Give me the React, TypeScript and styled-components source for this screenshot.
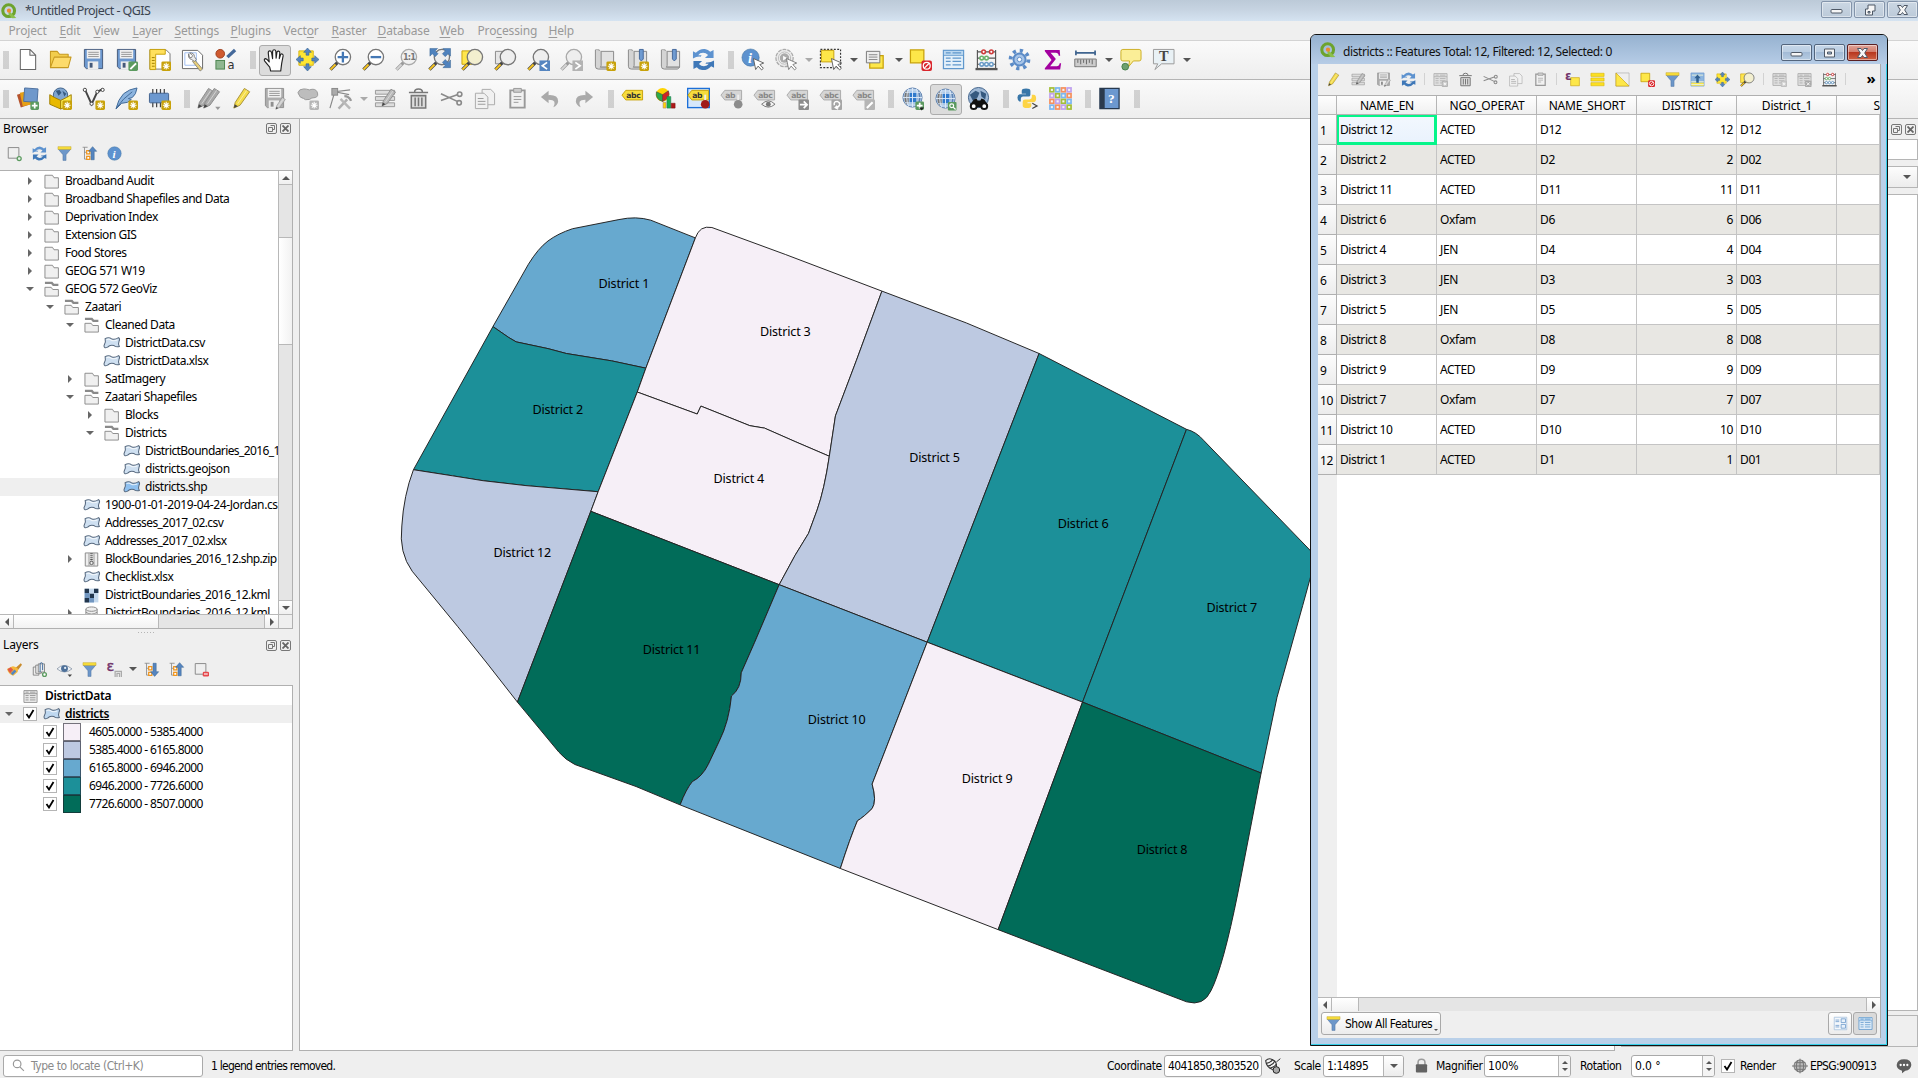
import React from "react";
import styled, { createGlobalStyle, css } from "styled-components";

const ui = `"Noto Sans", "Open Sans", sans-serif`;
const tahoma = `"DejaVu Sans Condensed", "DejaVu Sans", sans-serif`;

const Global = createGlobalStyle`
  body { margin: 0; background: #efefef; overflow: hidden; }
  * { box-sizing: border-box; }
  svg { display: block; flex: none; }
`;

/* ---------- icons ---------- */

const badge = (
  <g>
    <rect x="14" y="14" width="10" height="10" rx="1.5" fill="#c8a20a" />
    <path d="M19 15.5v7M15.5 19h7M16.6 16.6l4.8 4.8M21.4 16.6l-4.8 4.8" stroke="#fff" strokeWidth="1.1" />
  </g>
);
const greyBadge = (
  <g>
    <rect x="14" y="14" width="10" height="10" rx="1.5" fill="#b5b5b5" />
    <path d="M19 15.5v7M15.5 19h7M16.6 16.6l4.8 4.8M21.4 16.6l-4.8 4.8" stroke="#fff" strokeWidth="1.1" />
  </g>
);
const plusBadge = (
  <g>
    <rect x="15" y="15" width="9" height="9" rx="1.5" fill="#5b9a5f" />
    <path d="M19.5 16.5v6M16.5 19.5h6" stroke="#fff" strokeWidth="1.8" />
  </g>
);
const noBadge = (
  <g>
    <rect x="13" y="13" width="11" height="11" rx="2" fill="#d9252b" />
    <circle cx="18.5" cy="18.5" r="3.6" fill="none" stroke="#fff" strokeWidth="1.3" />
    <path d="M16.2 20.8l4.6-4.6" stroke="#fff" strokeWidth="1.3" />
  </g>
);
const glass = (lens: string, grey = false) => (
  <g>
    <path d="M1.5 22.5L9 15" stroke={grey ? "#999" : "#444"} strokeWidth="3.4" />
    <path d="M1.5 22.5L6.8 17.2" stroke={grey ? "#d5d5d5" : "#f7c520"} strokeWidth="2" />
    <circle cx="14.5" cy="9.5" r="8" fill={lens} stroke={grey ? "#aaa" : "#777"} strokeWidth="1.4" />
  </g>
);
const floppy = (c: string, s: string) => (
  <g>
    <path d="M2.5 1.5h19v20h-17l-2-2z" fill={c} stroke={s} />
    <rect x="5" y="2" width="14" height="9" fill="#efefef" />
    <path d="M6.5 4.5h11M6.5 6.7h11M6.5 8.9h11" stroke="#999" />
    <rect x="6" y="14" width="11" height="8" fill="#eee" />
    <rect x="8" y="15.5" width="3" height="5" fill={s} />
  </g>
);
const pencil = (c: string, s: string) => (
  <g>
    <path d="M4 22l1.5-6L15 1.500l5.500 3.500L10.500 19z" fill={c} stroke={s} strokeLinejoin="round" />
    <path d="M8 17.500L17.500 3.500" stroke="#fff" strokeOpacity=".5" />
    <path d="M4 22l1-4 3.2 2z" fill="#444" />
  </g>
);
const cursor = <path d="M13 11l2.3 11.5 2.6-3.6 3.6 4 1.8-1.7-3.6-3.9 4-1.6z" fill="#fff" stroke="#555" strokeWidth=".9" />;
const tagOf = (text: string, fill: string, line: string, ink: string) => (
  <g>
    <path d="M1 8.5l4-5h17.5v10H5z" fill={fill} stroke={line} />
    <text x="5.500" y="11.4" fontSize="8" fontWeight="700" fontFamily="DejaVu Sans" letterSpacing="-.4" fill={ink}>{text}</text>
  </g>
);
const globe = (
  <g>
    <circle cx="12" cy="11" r="10" fill="#bcd3ec" stroke="#5d7fae" />
    <path d="M5 4q-3 7 0 14l3-1V5z" fill="#777" />
    <path d="M9 5h7v12H9z" fill="#2f79cc" />
    <path d="M19 4q3 7 0 14l-2-1V5z" fill="#5b83b5" />
    <path d="M12 1v20M2 11h20M4 5.5h16M4 16.5h16M8 1.5q-4 9.500 0 19M16 1.500q4 9.500 0 19" stroke="#dce9f8" fill="none" strokeWidth="1" />
  </g>
);
const zoomWindow = <path d="M1 3h13v14H1z" fill="#ffe64d" stroke="#c8a20a" />;
const refresh = (
  <g fill="#5d92cf">
    <path d="M1 11V3.500l3 1.500Q8 .5 13.500 1q3.500.5 5.500 3l3.500-2v8.500h-9l3.300-3.200Q14.500 5 11.500 5 8 5 6.500 7.500H10L9 9q-4-.5-8 2z" />
    <path d="M23 13v7.500l-3-1.500Q16 23.500 10.500 23q-3.500-.5-5.500-3l-3.500 2v-8.500h9l-3.300 3.200Q9.500 19 12.500 19q3.500 0 5-2.500H14l1-1.500q4 .5 8-2z" fill="#3f78b8" />
  </g>
);
const scroll = (
  <g>
    <path d="M2.500 2h4v18h15V3.500H7" fill="#e2e2e2" stroke="#888" />
    <path d="M2.500 2v17q0 3 3 3h14l2-2h-14q1-1 1-2V3.500" fill="#d4d4d4" stroke="#888" />
  </g>
);
const ribbon = <path d="M14 1.500h4v10l-2 2-2-2z" fill="#6f9bd1" stroke="#44679b" />;
const arrows4 = (
  <path
    d="M12 0l4 4.500h-2.500v3h-3v-3H8zM12 24l4-4.500h-2.500v-3h-3v3H8zM0 12l4.500-4v2.500h3v3h-3V16zM24 12l-4.500-4v2.500h-3v3h3V16z"
    fill="#5585c0"
    stroke="#34618f"
    strokeWidth=".6"
  />
);
const funnel = (
  <g>
    <path d="M2 5l7.500 9v9h5v-9L22 5z" fill="#6d97c9" stroke="#44699a" strokeWidth=".7" />
    <path d="M1.500 1h21v4.500h-21z" fill="#f7dd3a" stroke="#b79a1f" strokeWidth=".6" />
  </g>
);
const abacus = (
  <g>
    <path d="M2.500 2v19M21.500 2v19M2.500 4h19M2.500 10.500h19M2.500 17h19" stroke="#555" strokeWidth="1.2" fill="none" />
    <path d="M.5 22h23" stroke="#555" strokeWidth="2.400" />
    <g fill="#fff" strokeWidth="1.600">
      <g stroke="#cf3b3b"><circle cx="9" cy="4" r="1.900" /><circle cx="17" cy="4" r="1.900" /></g>
      <g stroke="#6cb26c"><circle cx="7" cy="10.500" r="1.900" /><circle cx="12" cy="10.500" r="1.900" /></g>
      <g stroke="#6b9cc6"><circle cx="7" cy="17" r="1.900" /><circle cx="12" cy="17" r="1.900" /><circle cx="17" cy="17" r="1.900" /></g>
    </g>
  </g>
);
const trash = (
  <g stroke="#777" fill="none" strokeWidth="1.600">
    <path d="M4.500 9h15v13h-15z" fill="#ddd" /><path d="M2 5.800h20M8 5q0-3 4-3t4 3M8.500 11v9M12 11v9M15.500 11v9" />
  </g>
);
const scissors = (
  <g fill="none" stroke="#8a8a8a" strokeWidth="1.700">
    <path d="M1 7l17 8M1 14l17-6" /><circle cx="20.500" cy="7.500" r="2.300" /><circle cx="20" cy="16.500" r="2.300" />
  </g>
);
const pages = (
  <g fill="#f1f1f1" stroke="#aaa">
    <path d="M9.500 2.500h9l4 4v12h-13z" /><path d="M2.500 6.500h9l4 4v12h-13z" /><path d="M5 12h6M5 15h8M5 18h8" stroke="#999" />
  </g>
);
const clipboard = (
  <g fill="#f1f1f1" stroke="#999">
    <path d="M4.500 3.500h15v18h-15z" strokeWidth="2" /><path d="M8 1.500h8v4H8z" fill="#ccc" /><path d="M8 10h8M8 13h8M8 16h5" />
  </g>
);
const tableEdit = (
  <g>
    <path d="M1.500 3.500h20v4h-20zM1.500 10h20v4h-20zM1.500 16.500h20v4h-20z" fill="#ddd" stroke="#999" />
    <g transform="translate(5 1) scale(.85)">{pencil("#b9b9b9", "#888")}</g>
  </g>
);
const gridTable = (c: string, f: string) => (
  <g fill="none" stroke={c} strokeWidth="1.300">
    <path d="M1.500 2.500h21v19h-21z" fill={f} /><path d="M1.500 7.500h21M4 5h5M11 5h9M4 10.500h5M11 10.500h9M4 14h5M11 14h9M4 17.500h5M11 17.500h9" />
  </g>
);
const yellowBox = <path d="M1.500 2h14v13.500h-14z" fill="#fde749" stroke="#c8a20a" strokeWidth="1.300" />;
const vectorShape = (a: string) => (
  <g transform="translate(0 2) scale(1 .92)">
    <path d="M3 3.500Q8 .5 12.500 4 17 5.500 22 2q2.500 2 .5 6Q21 12 23 15.500 19 17 15.500 14 10 12 6.500 16.500 1 19 1.500 14 4.500 9 3 3.500z" fill={a} stroke="#56687e" strokeWidth="1.500" />
    <path d="M5 4.800q4-1.500 7 1.200 4 1.500 8-.5" stroke="#fff" strokeOpacity=".7" strokeWidth="1.800" fill="none" />
  </g>
);
const infoBall = (
  <g>
    <circle cx="10" cy="10" r="9" fill="#5d92cf" stroke="#41719f" strokeWidth=".6" />
    <text x="7.200" y="15.500" fontSize="15" fontStyle="italic" fontWeight="700" fontFamily="Liberation Serif" fill="#fff">i</text>
  </g>
);
const treeArrow = (up: boolean) => (
  <g>
    <path d="M1 2h8M4 2v19h6M4 10h6" stroke="#888" fill="none" strokeWidth="1.300" />
    <path d="M7.500 7.500h5v5h-5zM7.500 16.500h5v5h-5z" fill="#fff" stroke="#f0951d" strokeWidth="2" />
    <path d={up ? "M17 1l6.500 7.500h-4V22h-5V8.500h-4z" : "M17 23l6.500-7.500h-4V2h-5v13.500h-4z"} fill="#5585c0" stroke="#34618f" strokeWidth=".8" />
  </g>
);

const icons: Record<string, React.ReactNode> = {
  page: <path d="M4.500 1.500h10l6 6v15h-16zM14.500 1.500v6h6" fill="#fff" stroke="#666" strokeWidth="1.100" strokeLinejoin="round" />,
  folder: (
    <g stroke="#c79a20" strokeWidth="1.100" strokeLinejoin="round">
      <path d="M1.500 20V3.500h7l2.500 3h9v4" fill="#f2cd4c" /><path d="M1.500 20.500l4-11h17.500l-3 11z" fill="#fddb6b" />
    </g>
  ),
  save: floppy("#6c98cf", "#44597a"),
  saveAs: <g>{floppy("#6c98cf", "#44597a")}<rect x="14" y="14" width="10" height="10" rx="1.500" fill="#5b9a5f" /><path d="M16 22l6-6" stroke="#fff" strokeWidth="2" /></g>,
  layout: (
    <g>
      <path d="M2 2h17l4 4v16H2z" fill="#fff" stroke="#777" /><path d="M2 1.500h16v5H8v16H2z" fill="#ffe05c" stroke="#c8a20a" />
      <path d="M4 10h3M4 13h3M4 16h3M4 19h3" stroke="#a27f00" />{badge}
    </g>
  ),
  manager: (
    <g>
      <path d="M1.500 2.500h16l5 5v14h-21z" fill="#fff" stroke="#666" /><path d="M4 5h12v13H4z" fill="none" stroke="#9fbdf0" />
      <path d="M14 12l8.500 10-2.500 2-8-10z" fill="#e8cf7a" stroke="#777" strokeWidth=".8" />
      <path d="M8 6q-1 5 3 6l3 2 2-2-2-3q0-4-5-4l3 3-1 2-2 0z" fill="#ececec" stroke="#666" strokeWidth=".8" />
    </g>
  ),
  style: (
    <g>
      <circle cx="6.500" cy="6" r="4.500" fill="#cf5a30" stroke="#9d3d1b" /><path d="M14 9.500L22 2" stroke="#44699a" strokeWidth="3.500" />
      <rect x="2" y="13" width="9" height="9" fill="#8fb791" stroke="#4c8450" />
      <text x="14" y="22" fontSize="12" fontFamily="DejaVu Sans" fill="#333">a</text>
    </g>
  ),
  hand: (
    <path
      d="M8 23l-1-4-5-6q-1.500-2.500.5-3 1.500 0 4 3.500L5.500 4q0-2 1.500-2t2 2l1 6V2.500Q10.300.8 11.700.8t1.700 1.700l.3 7 .8-6q.3-1.500 1.700-1.300T17.500 4l-.5 6 1.300-4q.5-1.300 1.700-.8t1 2L19.500 15l-1 8z"
      fill="#fff" stroke="#222" strokeWidth="1.200" strokeLinejoin="round"
    />
  ),
  panSel: <g><path d="M3 3h15v15H3z" fill="#ffe633" stroke="#d6b411" />{arrows4}</g>,
  zoomIn: <g>{glass("#fff")}<path d="M14.500 4v11M9 9.500h11" stroke="#4478b5" strokeWidth="2.400" /></g>,
  zoomOut: <g>{glass("#fff")}<path d="M9 9.500h11" stroke="#4478b5" strokeWidth="2.400" /></g>,
  zoomOne: <g>{glass("#f1f1f1", true)}<text x="8.300" y="12.500" fontSize="8.500" fontWeight="700" letterSpacing="-.8" fontFamily="DejaVu Sans" fill="#777">1:1</text></g>,
  zoomFull: (
    <g>
      {glass("#eee")}
      <path d="M2 .5h8L7.500 3l3 3-3 3-3-3L2 8.500zM23.500.5v8L21 6l-3 3-3-3 3-3-2.500-2.500zM23.500 20.500h-8L18 18l-3-3 3-3 3 3 2.500-2.500z" fill="#4f82bd" stroke="#34618f" strokeWidth=".5" />
    </g>
  ),
  zoomSel: <g>{zoomWindow}{glass("#f3efcf")}</g>,
  zoomLayer: <g><path d="M1.500 3.500h10v13h-10z" fill="#e6e6e6" stroke="#888" />{glass("#eee")}</g>,
  zoomLast: <g>{glass("#eee")}<rect x="13" y="13" width="11" height="11" fill="#5585c0" /><path d="M21 15l-5 3.500 5 3.500" stroke="#fff" strokeWidth="1.800" fill="none" /></g>,
  zoomNext: <g>{glass("#eee", true)}<rect x="13" y="13" width="11" height="11" fill="#b3b3b3" /><path d="M16 15l5 3.500-5 3.500" stroke="#fff" strokeWidth="1.800" fill="none" /></g>,
  newView: <g>{scroll}{badge}</g>,
  newMark: <g>{scroll}{ribbon}{badge}</g>,
  marks: <g>{scroll}{ribbon}</g>,
  refresh,
  identify: <g>{infoBall}{cursor}</g>,
  action: (
    <g opacity=".8">
      <circle cx="11" cy="10.500" r="9" fill="#e8e8e8" stroke="#999" strokeWidth="1.300" strokeDasharray="4 1" />
      <circle cx="11" cy="10.500" r="6.300" fill="#fff" stroke="#aaa" />
      <circle cx="11" cy="10.500" r="5" fill="#999" /><path d="M9.500 8v5l4-2.500z" fill="#fff" />{cursor}
    </g>
  ),
  select: <g><path d="M1.500 1.500h21v19h-21z" fill="none" stroke="#333" strokeDasharray="2 1.500" strokeWidth="1.200" /><path d="M2.500 2.500h13v12h-13z" fill="#fde749" stroke="#c8a20a" />{cursor}</g>,
  selValue: <g><path d="M6 8h14v13H6z" fill="#fde749" stroke="#c8a20a" strokeWidth="1.300" /><path d="M2.500 3.500h14v12h-14z" fill="#eee" stroke="#777" /><path d="M5 7h9M5 9.500h9M5 12h9" stroke="#888" /></g>,
  deselect: <g>{yellowBox}{noBadge}</g>,
  attrTable: <g>{gridTable("#5f97cc", "#e4f0fa")}<path d="M2 3h20v4H2z" fill="#bcd8f0" /><path d="M4 5h5M11 5h9" stroke="#5f97cc" strokeWidth="1.300" /></g>,
  abacus,
  gear: (
    <g>
      <circle cx="12" cy="12" r="9.300" fill="none" stroke="#5b8bc7" strokeWidth="4" strokeDasharray="3.300 4" />
      <circle cx="12" cy="12" r="6.300" fill="#a6c4e8" stroke="#5b8bc7" strokeWidth="2" /><circle cx="12" cy="12" r="2.300" fill="#fff" stroke="#5b8bc7" />
    </g>
  ),
  sigma: <path d="M4 2h15.500l.5 6h-1.500q-.5-3-3-3H10l5.500 6.500L9.500 19h7q2.500 0 3-3H21l-1 6.500H4V21l7-8.500L4 3.500z" fill="#a3009f" />,
  measure: <g><path d="M1.500 5h21M2 2.500v5M22 2.500v5" stroke="#3f648f" strokeWidth="1.800" /><path d="M.8 11.500h22.400v8H.8z" fill="#ccc" stroke="#777" /><path d="M4 12v3.500M7 12v5M10 12v3.500M13 12v5M16 12v3.500M19 12v5" stroke="#666" /></g>,
  tip: <g><path d="M4 1.500h17q2 0 2 2v8q0 2-2 2h-6l-5 6 1-6H4q-2 0-2-2v-8q0-2 2-2z" fill="#fbee97" stroke="#ccae24" /><circle cx="6.500" cy="19.500" r="3.500" fill="#6ea06e" stroke="#46804a" /></g>,
  annotate: <g><path d="M1.500 1.500h21.500v15H10l-7 6 3-6H1.500z" fill="#e9f1f5" stroke="#999" /><text x="7.200" y="14" fontSize="15" fontWeight="700" fontFamily="Liberation Serif" fill="#444">T</text></g>,
  layers: (
    <g>
      <path d="M1 8l10-3 4 13-10 3.500z" fill="#b5522c" /><path d="M4 6l11-2 2 14-10 2z" fill="#e5a016" />
      <path d="M9 1l14 1-1 14-14-1z" fill="#6f98cb" stroke="#4b6f9f" />{plusBadge}
    </g>
  ),
  package: (
    <g>
      <circle cx="12" cy="8.500" r="7.500" fill="#7fa5cf" stroke="#3d5f88" /><path d="M7 4l4-1 2 3-3 3zM14 4l4 3-2 3z" fill="#35597f" />
      <path d="M.8 8l5 3 6.500 3v9L.8 18z" fill="#e8b900" stroke="#a07d00" /><path d="M23.200 8l-5 3-6 3v9l11-5z" fill="#ffee55" stroke="#a07d00" />{badge}
    </g>
  ),
  vNodes: <g><path d="M2 2.500l1.500 1L10 18l6-13 6-3" stroke="#444" strokeWidth="2" fill="none" /><g fill="#fff" stroke="#444"><circle cx="3" cy="3" r="1.700" /><circle cx="10" cy="17.500" r="1.700" /><circle cx="16" cy="5" r="1.700" /><circle cx="21.500" cy="3" r="1.700" /></g>{badge}</g>,
  feather: <g><path d="M1 23Q3 13 9 7q6-5 14-6-1 7-5 10l-4 1 3 1q-3 4-10 4z" fill="#8cb4df" stroke="#3f6795" /><path d="M1.500 22Q8 12 18 5" stroke="#3f6795" fill="none" />{badge}</g>,
  chip: <g><path d="M5 2v19M9 2v19M13 2v19M17 2v19" stroke="#444" strokeWidth="1.300" /><rect x="1.500" y="6.500" width="20" height="10" rx="1" fill="#6c98cf" stroke="#40608d" />{badge}</g>,
  pencils: <g><g transform="translate(-3 0)">{pencil("#a9a9a9", "#8c8c8c")}</g><g transform="translate(3 0)">{pencil("#a9a9a9", "#8c8c8c")}</g><path d="M19 20.500h5.500L21.700 24z" fill="#999" /></g>,
  pencil: pencil("#f4dc4a", "#a8913a"),
  saveGrey: <g>{floppy("#adadad", "#8f8f8f")}<g transform="translate(11 10) scale(.6)">{pencil("#ccc", "#888")}</g></g>,
  blob: <g><path d="M2 6q1-4 6-4 3 0 6 1 6-2 8 2 2 5-2 6-4 0-6 2-5 1-6-1-4 0-6-6z" fill="#bdbdbd" stroke="#999" />{greyBadge}</g>,
  nodes: (
    <g>
      <path d="M1 22L6 5l16-2M6 5l15 3" stroke="#888" strokeWidth="1.200" fill="none" /><rect x="3" y="1.500" width="6" height="7" fill="#aaa" stroke="#888" />
      <path d="M10 22.500L19 13" stroke="#b0b0b0" strokeWidth="2.600" /><path d="M12 12.500L22 22.500" stroke="#b8b8b8" strokeWidth="2.600" /><path d="M16 9.500q5 0 7 5" stroke="#999" strokeWidth="2.500" fill="none" />
    </g>
  ),
  tableEdit,
  trash,
  cut: scissors,
  copy: pages,
  paste: clipboard,
  undo: <path d="M2 10.500L10 4v4.500Q20 8 20 15q-.5 4-5 6 2-3 1-5.500-1-2.300-6-2.300V17z" fill="#aaa" />,
  redo: <path d="M22 10.500L14 4v4.500Q4 8 4 15q.5 4 5 6-2-3-1-5.500 1-2.300 6-2.300V17z" fill="#aaa" />,
  label: tagOf("abc", "#f7dc3c", "#c8a20a", "#333"),
  diagram: (
    <g>
      <circle cx="9" cy="8" r="7" fill="#ffd400" /><path d="M9 8L2.500 5Q1 13 9 15z" fill="#2bab4a" stroke="#444" strokeWidth=".6" /><path d="M9 8l6-4q3 7-6 11z" fill="#d32424" stroke="#444" strokeWidth=".6" />
      <path d="M9.500 16h3v6h-3z" fill="#ffd400" stroke="#a87" strokeWidth=".6" /><path d="M13.500 10h4v12h-4z" fill="#17b04c" stroke="#275" strokeWidth=".6" /><path d="M18 17h4v5h-4z" fill="#b01717" stroke="#711" strokeWidth=".6" />
    </g>
  ),
  labelPin: <g><rect x=".7" y="1.500" width="22.600" height="20" fill="#d7e8fb" stroke="#1c6fd8" strokeWidth="1.400" />{tagOf("ab", "#f7dc3c", "#c8a20a", "#333")}<path d="M19 8v8" stroke="#eee" strokeWidth="2" /><circle cx="19" cy="18" r="4.500" fill="#a01919" /></g>,
  labelG1: <g>{tagOf("ab", "#d5d5d5", "#aaa", "#888")}<path d="M19 8v8" stroke="#eee" strokeWidth="2" /><circle cx="19" cy="18" r="4.500" fill="#8c8c8c" /></g>,
  labelG2: <g>{tagOf("abc", "#d5d5d5", "#aaa", "#888")}<path d="M9 18q7-7 14 0-7 6-14 0z" fill="#f3f3f3" stroke="#777" /><circle cx="16" cy="18" r="2.500" fill="#777" /></g>,
  labelG3: <g>{tagOf("abc", "#d5d5d5", "#aaa", "#888")}<rect x="13" y="13" width="11" height="11" rx="1" fill="#8c8c8c" /><path d="M14.500 18.500h7M18.500 15l3.500 3.500-3.500 3.500" stroke="#fff" strokeWidth="1.800" fill="none" /></g>,
  labelG4: <g>{tagOf("abc", "#d5d5d5", "#aaa", "#888")}<rect x="13" y="13" width="11" height="11" rx="1" fill="#a5a5a5" /><path d="M16 19q-1-4 3-4 3 1 2.500 3.500-1 3-4 3M20 23l-3-1.500 2-2" stroke="#fff" strokeWidth="1.500" fill="none" /></g>,
  labelG5: <g>{tagOf("abc", "#d5d5d5", "#aaa", "#888")}<rect x="13" y="13" width="11" height="11" rx="1" fill="#b5b5b5" /><path d="M15.500 22l6-6" stroke="#fff" strokeWidth="2.200" /></g>,
  globePlus: <g>{globe}{plusBadge}<path d="M19 21.500h5l-2.500 3z" fill="#222" /></g>,
  globeSearch: <g>{globe}<rect x="14.500" y="14.500" width="9" height="9" rx="1" fill="#5b9a5f" /><circle cx="18.500" cy="18.500" r="2" fill="none" stroke="#fff" strokeWidth="1.200" /><path d="M20 20l2.500 2.500" stroke="#fff" strokeWidth="1.300" /></g>,
  globeBino: (
    <g>
      <circle cx="12" cy="11" r="10.500" fill="#9fb9d6" stroke="#3d5f88" /><path d="M3 8l6-4 4 2-2 5-5 3zM14 4l6 3-1 6-4-3z" fill="#35597f" />
      <path d="M7 13l3-1 1 2h3l1-2 3 1 4 6v2H3v-2z" fill="#111" /><circle cx="7" cy="20" r="3" fill="#fff" stroke="#111" strokeWidth="2" /><circle cx="18" cy="20" r="3" fill="#fff" stroke="#111" strokeWidth="2" />
    </g>
  ),
  python: (
    <g>
      <path d="M6 7V4q0-2.500 4.500-2.500T15 4v4q0 2-2 2H7.500Q5 10 5 13v2H3.500Q1.500 14 1.500 11T4 7.500h6.500V7z" fill="#3876a8" />
      <path d="M16.500 8h2Q21 8 21 12t-3 4h-6v1h4v2.500Q16 22 11.500 22T7 19.500v-4q0-2.500 2.500-2.500H14q2.500 0 2.500-2.500z" fill="#fdd445" />
      <path d="M17 17l5 2.700-5 2.700" stroke="#444" strokeWidth="1.200" fill="none" />
    </g>
  ),
  mosaic: (
    <g>
      {[0, 1, 2, 3].map(r =>
        [0, 1, 2, 3].map(c => (
          <rect key={`${r}${c}`} x={1 + c * 6} y={1 + r * 6} width="4" height="4" fill="#f4f4f4"
            stroke={["#a4bf3a", "#7db7f0", "#f5915f", "#c0a2ee"][(c + r * 3) % 4]} strokeWidth="1.800" />
        ))
      )}
    </g>
  ),
  help: <g><path d="M2 1.500h20v21H2z" fill="#6c98cf" stroke="#26384e" strokeWidth="1.300" /><path d="M2 1.500h5v21H2z" fill="#2b3a4d" /><text x="10.500" y="17" fontSize="14" fontWeight="700" fontFamily="Liberation Serif" fill="#fff">?</text></g>,
  addBox: <g><path d="M2 2.500h17v17H2z" fill="none" stroke="#888" strokeWidth="1.500" /><circle cx="19.500" cy="20" r="3.200" fill="#e7f3e7" stroke="#5b9a5f" strokeWidth="2" /></g>,
  removeBox: <g><path d="M2 2.500h17v17H2z" fill="none" stroke="#888" strokeWidth="1.500" /><rect x="14" y="15.500" width="10" height="7.500" rx="2" fill="#e6484c" /><path d="M16 19.200h6" stroke="#fff" strokeWidth="1.800" /></g>,
  funnel,
  up: treeArrow(true),
  down: treeArrow(false),
  info: <g transform="scale(1.200)">{infoBall}</g>,
  brush: (
    <g>
      <path d="M14 9l8-7 2 2.500-6 8z" fill="#c98b2c" />
      <path d="M8 7q5-1 10 4l-1 5-7 6q-8-3-10-11z" fill="#f6b93b" />
      <path d="M1 11l5-2.500 4 4-5 5.500q-3-3-4-7z" fill="#e05a4a" />
      <path d="M6 18l6-6 3 3-6 6z" fill="#5585c0" />
    </g>
  ),
  groupAdd: <g fill="#eee" stroke="#777" strokeWidth="1.300"><path d="M2 8h9v13H2z" /><path d="M6 5h9v13H6z" /><path d="M10 3h10v13H10z" /><path d="M13 16V4q0-3 2-3t2 3v9" fill="none" stroke="#456f9f" strokeWidth="1.600" /><circle cx="20" cy="20" r="3" fill="#fff" stroke="#5b9a5f" strokeWidth="2.200" /></g>,
  eye: <g><path d="M0 11Q11 0 24 11 12 21 0 11z" fill="#eef2f6" stroke="#8b98a7" strokeWidth="1.300" /><circle cx="12" cy="10.500" r="5.500" fill="#4d7099" /><circle cx="13" cy="9.500" r="1.800" fill="#e4eef8" /><path d="M17 20h7l-3.500 4z" fill="#444" /></g>,
  expr: <g><text x="-1" y="14" fontSize="23" fontFamily="DejaVu Sans" fill="#73376d" stroke="#73376d" strokeWidth=".7">ε</text><path d="M13 24v-9h10v9M16 24v-6h4v6" stroke="#aaa" strokeWidth="2" fill="none" /></g>,
  addRow: <g><g opacity=".75">{gridTable("#999", "#ddd")}</g>{greyBadge}</g>,
  exprSel: <g><path d="M9 9h14v13H9z" fill="#fde749" stroke="#c8a20a" /><text x="0" y="13" fontSize="19" fontWeight="700" fontFamily="DejaVu Sans" fill="#73376d">ε</text></g>,
  selAll: <path d="M1.500 2h21v5h-21zM1.500 9.500h21v5h-21zM1.500 17h21v5h-21z" fill="#fde020" stroke="#d9b90e" />,
  invert: <g><path d="M1.500 1.500h21v21h-21z" fill="#eee" stroke="#aaa" /><path d="M1.500 1.500v21h21z" fill="#fde749" stroke="#c8a20a" /></g>,
  moveTop: <g><path d="M1.500 1.500h21v21h-21z" fill="#8db5df" stroke="#6c98cf" /><path d="M2 17h20v5H2z" fill="#fde749" /><path d="M2 15.500h20M2 20h20M3 5h18" stroke="#e8f0d8" strokeWidth="1.500" /><path d="M12 4l5 6h-3v7h-4v-7H7z" fill="#31608f" /></g>,
  newField: <g opacity=".8">{gridTable("#999", "#ddd")}{greyBadge}</g>,
  delField: <g opacity=".8">{gridTable("#999", "#ddd")}<rect x="13" y="14" width="10" height="10" fill="#999" /><path d="M15.500 16.500l5 5M20.500 16.500l-5 5" stroke="#fff" strokeWidth="1.500" /></g>,
  dir: <path d="M1.500 2h12l2.500 4h7v16.500H1.500z" fill="#f0f0f0" stroke="#8a8a8a" strokeWidth="1.500" strokeLinejoin="round" />,
  dirOpen: <g><path d="M1.500 1.500h11l2.500 3H23" stroke="#8a8a8a" strokeWidth="3.500" fill="none" /><path d="M1.500 8.500h10l2.500 3.500h9v10.500H1.500z" fill="#f0f0f0" stroke="#8a8a8a" strokeWidth="1.500" /></g>,
  vector: vectorShape("#cfe0f1"),
  vectorSel: vectorShape("#8fc0ef"),
  vectorPoly: vectorShape("#bfd8f0"),
  zip: <g><path d="M2 1.500h20v21H2z" fill="#eee" stroke="#888" strokeWidth="1.500" /><path d="M8 2v20M16 2v20" stroke="#999" strokeWidth="1.500" /><path d="M12 2v13" stroke="#555" strokeWidth="4" strokeDasharray="1.700 1.400" /><circle cx="12" cy="17.500" r="2.700" fill="#eee" stroke="#555" strokeWidth="1.500" /></g>,
  raster: <g><path d="M1 1h22v22H1z" fill="#c4d8ec" /><path d="M1 1h7v7H1zM16 1h7v7h-7zM9 9h7v7H9zM1 16h7v7H1z" fill="#22364d" /><path d="M8 16h8v7H8zM1 8h8v8H1z" fill="#7196c0" /></g>,
  db: <g fill="#eee" stroke="#888" strokeWidth="1.500"><path d="M3 5v17h18V5" /><ellipse cx="12" cy="5" rx="9" ry="3.500" /><path d="M3 10q9 6 18 0M3 16q9 6 18 0" fill="none" /></g>,
  plainTable: gridTable("#888", "#ededed"),
  search: <g fill="none" stroke="#999" strokeWidth="2.200"><circle cx="9.500" cy="9" r="7" /><path d="M14.500 14.500L22 22" /></g>,
  tracker: (
    <g>
      <path d="M1 4q5-5 11-1 6 3 5 10-2 5-6 4Q2 14 1 4z" fill="#f4f4f4" stroke="#333" strokeWidth="1.600" />
      <path d="M2 8q6-1 10-6M4 12q8-1 11-8M8 15q7-2 9-6" stroke="#333" strokeWidth="1.700" fill="none" />
      <circle cx="17" cy="18" r="5" fill="#aaa" stroke="#222" strokeWidth="1.500" /><path d="M17 6l6-5" stroke="#333" strokeWidth="1.500" />
    </g>
  ),
  lock: <g><path d="M6.500 12V7q0-5 5.500-5t5.500 5v5" fill="none" stroke="#9c9c9c" strokeWidth="2.500" /><rect x="3" y="10" width="18" height="13" rx="1.500" fill="#636363" /></g>,
  crs: <g fill="none" stroke="#777" strokeWidth="1.500"><circle cx="12" cy="12" r="9" fill="#bbb" /><path d="M0 12h24M12 1v22M4 7h16M4 17h16M9 3Q4 12 9 21M15 3q5 9 0 18" /></g>,
  bubble: <g><path d="M12 2q11 0 11 8.500-1 8-9 8.500l-5 4v-4Q1 17 1 10.500 2 2 12 2z" fill="#5d5d5d" /><circle cx="7" cy="10.500" r="1.700" fill="#fff" /><circle cx="12" cy="10.500" r="1.700" fill="#fff" /><circle cx="17" cy="10.500" r="1.700" fill="#fff" /></g>,
  form: <g stroke="#6f9bcb" fill="#e8f1fa" strokeWidth="1.300"><path d="M2 2h20v20H2z" fill="#f4f8fc" stroke="#a9c3df" /><path d="M13 4.500h7v6h-7zM13 13.500h7v6h-7z" /><path d="M4 6.500h6M4 9h6M4 15h6M4 17.500h6" /></g>,
  logo: (
    <g>
      <circle cx="11.500" cy="11.500" r="8.800" fill="none" stroke="#6da32d" strokeWidth="4.600" />
      <path d="M12 12l11 10.500-6 .5-6-6z" fill="#8cc04a" /><circle cx="12" cy="11.500" r="3.200" fill="#ee8a2c" />
    </g>
  ),
};

const Icon = ({ name, size = 24 }: { name: string; size?: number }) => (
  <svg width={size} height={size} viewBox="0 0 24 24" overflow="visible">{icons[name]}</svg>
);

/* ---------- shared parts ---------- */

const Desktop = styled.div`
  width: 1918px; height: 1078px; display: flex; flex-direction: column;
  background: #efefef; overflow: hidden; color: #000; position: relative;
  font: 12px/18px ${ui}; letter-spacing: -0.25px; white-space: pre;
`;

const TitleBar = styled.div`
  height: 21px; display: flex; align-items: center; padding-left: 1px; gap: 8px; flex: none;
  background: linear-gradient(#bccad8, #c6d3e1 45%, #d5e3f1);
  color: #3b4450; font-size: 12.5px; letter-spacing: -0.55px;
`;
const TitleText = styled.div<{ $drop: number }>`padding-top: ${p => p.$drop}px;`;
const Push = styled.div`flex: 1;`;
const WinButtons = styled.div<{ $drop: number }>`display: flex; gap: 2px; align-self: flex-start; padding-top: ${p => p.$drop}px;`;
const WinButton = styled.div<{ $tone: "main" | "dialog" | "close" }>`
  width: 31px; height: 17px; border-radius: 2px; display: flex; align-items: center; justify-content: center;
  border: 1px solid #8394aa; box-shadow: inset 0 0 0 1px rgba(255,255,255,.45);
  background: ${p => p.$tone === "close" ? "linear-gradient(#e2a59a, #d27a69 48%, #b8371f 50%, #cf6346)" : p.$tone === "dialog" ? "linear-gradient(#c6d7e9, #bacde2 48%, #a3bbd6 50%, #b7cce2)" : "linear-gradient(#cbd7e3, #bccad9)"};
  ${p => p.$tone === "close" && css`border-color: #5a1f22;`}
  ${p => p.$tone === "dialog" && css`border-color: #53657d;`}
`;
const glyphs = {
  min: <rect x="1" y="5.500" width="11" height="3.500" rx="1" />,
  restore: <path d="M5 1h7v6H9.500v4h-7V5H5zM5 7.500h2v1.500H5z" fillRule="evenodd" />,
  max: <path d="M1.500 2h10v8h-10zM4.500 5h4v2h-4z" fillRule="evenodd" />,
  close: <path d="M1.500 1.500h3.500L6.500 3.500 8 1.500h3.500L8.700 6l2.800 4.500H8L6.500 8.500 5 10.500H1.500L4.300 6z" />,
};
const WinGlyph = ({ kind }: { kind: keyof typeof glyphs }) => (
  <svg width="13" height="12" viewBox="0 0 13 12" fill="#f6f6f6" stroke="#4e5866" strokeWidth="1">{glyphs[kind]}</svg>
);

const MenuBar = styled.div`
  height: 20px; flex: none; display: flex; align-items: center; padding: 1px 0 0 8.500px;
  border-bottom: 1px solid #d3d3d3; color: #999; font-size: 12px; letter-spacing: -0.15px;
`;
const MenuItem = styled.div<{ $w: number }>`
  width: ${p => p.$w}px; u { text-underline-offset: 2px; }
`;

const ToolBar = styled.div`
  height: 39px; flex: none; display: flex; align-items: center; padding-left: 0;
  background: linear-gradient(#fafafa, #eeeeee); border-bottom: 1px solid #b4b4b4;
`;
const Slot = styled.div<{ $on?: boolean }>`
  width: 33px; height: 38px; display: flex; align-items: center; justify-content: center; flex: none; padding: 0 1px 1px 0;
  ${p => p.$on && css`
    width: 32px; height: 31px; margin: 0 1px 0 0; padding: 0; border: 1px solid #acacac; border-radius: 3px; background: #dcdcdc;
  `}
`;
const Grip = styled.div<{ $w: number }>`
  width: ${p => p.$w}px; height: 18px; display: flex; justify-content: flex-end; padding-right: 3px; flex: none;
  &::after {
    content: ""; width: 6px; height: 18px;
    background: radial-gradient(circle at 1px 1px, #bdbdbd 0.6px, transparent 0.9px) 0 0 / 2px 2px;
  }
`;
const Caret = styled.div<{ $w: number; $dim?: boolean }>`
  width: ${p => p.$w}px; display: flex; justify-content: center; flex: none;
  &::after {
    content: ""; border: 4px solid transparent; border-bottom: 0; border-top-color: ${p => p.$dim ? "#aaa" : "#555"};
  }
`;

/* "|" is a grip, "v" a drop-down caret, "x" a dimmed caret, "*" marks a pressed button */
const renderTools = (list: string) =>
  list.split(" ").map((t, i) => {
    if (t === "|") return <Grip key={i} $w={i === 0 ? 11.5 : 16} />;
    if (t === "v" || t === "x") return <Caret key={i} $w={12} $dim={t === "x"} />;
    const on = t[0] === "*";
    return <Slot key={i} $on={on}><Icon name={on ? t.slice(1) : t} size={23} /></Slot>;
  });

const row1 = "| page folder save saveAs layout manager style | *hand panSel zoomIn zoomOut zoomOne zoomFull zoomSel zoomLayer zoomLast zoomNext newView newMark marks refresh | identify action x select v selValue v deselect attrTable abacus gear sigma measure v tip annotate v";
const row2 = "| layers package vNodes feather chip | pencils pencil saveGrey blob nodes x tableEdit trash cut copy paste undo redo | label diagram labelPin labelG1 labelG2 labelG3 labelG4 labelG5 | globePlus *globeSearch globeBino | python mosaic | help |";

const Workspace = styled.div`height: 932px; display: flex; flex: none;`;
const LeftDock = styled.div`width: 293px; display: flex; flex-direction: column; flex: none;`;
const DockHead = styled.div<{ $h: number }>`
  height: ${p => p.$h}px; flex: none; display: flex; align-items: center; padding: 0 2px 0 3px; gap: 3px; letter-spacing: -0.15px;
`;
const DockButton = styled.div`
  width: 11px; height: 11px; border: 1.500px solid #777; border-radius: 2px; display: flex; align-items: center; justify-content: center;
`;
const dockButtons = (
  <>
    <DockButton><svg width="7" height="7" viewBox="0 0 7 7" fill="none" stroke="#777"><path d="M2.500.5h4v4h-2M.5 2.500h4v4h-4z" /></svg></DockButton>
    <DockButton><svg width="7" height="7" viewBox="0 0 7 7" stroke="#666" strokeWidth="1.800"><path d="M.5.5l6 6M6.500.5l-6 6" /></svg></DockButton>
  </>
);
const MiniBar = styled.div<{ $h: number }>`
  height: ${p => p.$h}px; flex: none; display: flex; align-items: center; padding: 0 0 2px 2px;
`;
const MiniSlot = styled.div`width: 25px; display: flex; justify-content: center; flex: none;`;

const Frame = styled.div<{ $h: number; $drop?: number }>`
  height: ${p => p.$h}px; flex: none; border: 1px solid #b0b0b0; border-left: 0; background: #fff; display: flex; flex-direction: column; overflow: hidden;
  padding-top: ${p => p.$drop ?? 0}px;
`;
const FrameRow = styled.div`display: flex; flex: 1; min-height: 0;`;
const TreeList = styled.div`flex: 1; overflow: hidden; padding-top: 1px; height: 444px;`;
const TreeRow = styled.div<{ $depth: number; $on?: boolean; $ls: number }>`
  height: 18px; display: flex; align-items: center; padding-left: ${p => 24 + p.$depth * 20}px;
  background: ${p => p.$on ? "#efefef" : "transparent"}; letter-spacing: ${p => p.$ls}px;
`;
const Twist = styled.div<{ $s?: string }>`
  width: 12px; margin-right: 8px; display: flex; justify-content: center; flex: none;
  &::after {
    content: ""; border: 4px solid transparent;
    ${p => p.$s === "o" ? css`border-bottom: 0; border-top-color: #666;` : p.$s === "c" ? css`border-right: 0; border-left-color: #666;` : ""}
  }
`;
const TreeIcon = styled.div<{ $wide: boolean }>`
  width: 16px; margin: ${p => p.$wide ? "0 6px 0 -1px" : "0 5px 0 0"}; flex: none;
`;

const tree: [number, string, string, string, boolean?][] = [
  [0, "c", "dir", "Broadband Audit"],
  [0, "c", "dir", "Broadband Shapefiles and Data"],
  [0, "c", "dir", "Deprivation Index"],
  [0, "c", "dir", "Extension GIS"],
  [0, "c", "dir", "Food Stores"],
  [0, "c", "dir", "GEOG 571 W19"],
  [0, "o", "dirOpen", "GEOG 572 GeoViz"],
  [1, "o", "dirOpen", "Zaatari"],
  [2, "o", "dirOpen", "Cleaned Data"],
  [3, "", "vector", "DistrictData.csv"],
  [3, "", "vector", "DistrictData.xlsx"],
  [2, "c", "dir", "SatImagery"],
  [2, "o", "dirOpen", "Zaatari Shapefiles"],
  [3, "c", "dir", "Blocks"],
  [3, "o", "dirOpen", "Districts"],
  [4, "", "vector", "DistrictBoundaries_2016_1"],
  [4, "", "vector", "districts.geojson"],
  [4, "", "vectorSel", "districts.shp", true],
  [2, "", "vector", "1900-01-01-2019-04-24-Jordan.cs"],
  [2, "", "vector", "Addresses_2017_02.csv"],
  [2, "", "vector", "Addresses_2017_02.xlsx"],
  [2, "c", "zip", "BlockBoundaries_2016_12.shp.zip"],
  [2, "", "vector", "Checklist.xlsx"],
  [2, "", "raster", "DistrictBoundaries_2016_12.kml"],
  [2, "c", "db", "DistrictBoundaries_2016_12.kml"],
];
const tracking = (name: string) => {
  if (name.endsWith(".kml")) return -0.52;
  if (name.includes("_20")) return -0.59;
  if (name.startsWith("1900")) return -0.38;
  return -0.47;
};

const VScroll = styled.div`
  width: 14px; flex: none; background: #e5e5e5; border-left: 1px solid #b8b8b8; display: flex; flex-direction: column;
`;
const HScroll = styled.div`
  height: 14px; flex: none; background: #e5e5e5; border-top: 1px solid #b8b8b8; display: flex;
`;
const ScrollButton = styled.div<{ $d: "u" | "d" | "l" | "r" }>`
  width: 13px; height: 13px; flex: none; background: linear-gradient(#fff, #efefef); display: flex; align-items: center; justify-content: center;
  &::after {
    content: ""; border: 4px solid transparent;
    ${p => ({
      u: css`border-top: 0; border-bottom-color: #555;`,
      d: css`border-bottom: 0; border-top-color: #555;`,
      l: css`border-left: 0; border-right-color: #555;`,
      r: css`border-right: 0; border-left-color: #555;`,
    })[p.$d]}
  }
`;
const VTrack = styled.div`
  flex: 1; border: solid #b8b8b8; border-width: 1px 0; padding-top: 52px;
`;
const VThumb = styled.div`height: 108px; background: linear-gradient(90deg, #fff, #f2f2f2); border: solid #b8b8b8; border-width: 1px 0;`;
const HThumb = styled.div<{ $w: number }>`width: ${p => p.$w}px; background: linear-gradient(#fff, #f2f2f2); border: solid #b8b8b8; border-width: 0 1px;`;
const HTrack = styled.div`flex: 1; border-right: 1px solid #b8b8b8;`;
const Corner = styled.div`width: 14px; background: #efefef; border-left: 1px solid #b8b8b8;`;
const SplitDots = styled.div`
  height: 6px; flex: none; display: flex; justify-content: center; align-items: center;
  &::after { content: ""; width: 17px; height: 1px; background: repeating-linear-gradient(90deg, #b5b5b5 0 1px, transparent 1px 3px); }
`;

const LayerRow = styled.div<{ $pad: number; $on?: boolean; $bold?: boolean }>`
  height: 18px; flex: none; display: flex; align-items: center; padding-left: ${p => p.$pad}px;
  background: ${p => p.$on ? "#efefef" : "transparent"}; letter-spacing: -0.6px;
  ${p => p.$bold && css`font-weight: 600; letter-spacing: -0.33px;`}
`;
const Box = styled.div`
  width: 14px; height: 14px; border: 1px solid #b5b5b5; background: #fff; flex: none; display: flex; align-items: center; justify-content: center;
`;
const Check = () => (
  <Box><svg width="10" height="10" viewBox="0 0 10 10" fill="none" stroke="#000" strokeWidth="1.800"><path d="M1.500 5l2.500 3.500L8.500 1" /></svg></Box>
);
const Swatch = styled.div<{ $c: string }>`
  width: 18px; height: 18px; margin: 0 8px 0 6px; background: ${p => p.$c}; border: 1px solid rgba(30,30,40,.6); flex: none;
`;
const Spacer = styled.div<{ $w: number }>`width: ${p => p.$w}px; flex: none;`;

const palette = ["#f6eff7", "#bdc9e1", "#67a9cf", "#1c9099", "#016c59"];
const classes = ["4605.0000 - 5385.4000", "5385.4000 - 6165.8000", "6165.8000 - 6946.2000", "6946.2000 - 7726.6000", "7726.6000 - 8507.0000"];

/* ---------- map ---------- */

const Canvas = styled.div`
  width: 1316px; margin-left: 6px; flex: none; background: #fff; border: 1px solid #b0b0b0; border-top: 0; overflow: hidden;
`;
const districts: [string, number, string, number, number][] = [
  ["District 1", 2, "M403 267L432 216Q440 203 448 197Q456 191 468 187L506 179.500Q520 176.500 532 180L568.500 194.500L528 301L500 295L463 289L448 285L422 279.500L416 276Z", 510, 231.5],
  ["District 2", 3, "M403 267L416 276L422 279.500L448 285L463 289L500 295L528 301L521 320.500L489 402L430 397L395 393L370 389L338 384Z", 456, 334.5],
  ["District 12", 1, "M338 384L370 389L395 393L430 397L489 402L483 418L423 574L398 542L374 512L337 467Q326 452 328.500 430Q330 405 338 384Z", 427, 451.5],
  ["District 3", 0, "M568.500 194.500Q572 184 582 186L642 208L721 238L700 295L683 340L678 373L650 361L625 350L613 348L573 332L570 338.500L521 320.500L528 301Z", 642, 271],
  ["District 4", 0, "M521 320.500L570 338.500L573 332L613 348L625 350L650 361L678 373Q674 400 668 417L661 436L650 454L637 478L483 418L489 402Z", 604, 391],
  ["District 5", 1, "M721 238L790 264L849.500 289L758 525L637 478L650 454L661 436L668 417Q674 400 678 373L683 340L700 295Z", 764, 373.5],
  ["District 6", 3, "M849.500 289L970 351L885 574L758 525Z", 885.5, 428],
  ["District 7", 3, "M970 351Q978 353 984 360L1076 455L1065 495L1044 570L1031 632L885 574Z", 1007, 496.5],
  ["District 11", 4, "M483 418L637 478L617 525L606 550Q606 563 598 569Q596 590 588 606L579 625Q574 635 566 639Q561 645 556 658L520 643L470 625Q462 621 457 615L423 574Z", 549, 531],
  ["District 10", 2, "M637 478L758 525L713 641Q717 655 713 661Q706 668 701 671Q695 685 687 710L556 658Q561 645 566 639Q574 635 579 625L588 606Q596 590 598 569Q606 563 606 550L617 525Z", 684, 588],
  ["District 9", 0, "M758 525L885 574L816 760L687 710Q695 685 701 671Q706 668 713 661Q717 655 713 641Z", 807, 636],
  ["District 8", 4, "M885 574L1031 632L1012 730Q1000 790 990 810Q984 823 970 819L816 760Z", 950, 694],
];
const MapView = () => (
  <svg width="1314" height="931" viewBox="300 119 1314 931">
    <g transform="scale(1.2232)">
      {districts.map(([n, c, d]) => <path key={n} d={d} fill={palette[c]} stroke="#232323" strokeWidth=".8" strokeLinejoin="round" />)}
      {districts.map(([n, , , x, y]) => (
        <text key={n} x={x} y={y + 4} textAnchor="middle" fontSize="10.300" letterSpacing="-.15" fontFamily="Noto Sans">{n}</text>
      ))}
    </g>
  </svg>
);

const RightDock = styled.div`
  width: 297px; margin-left: 6px; flex: none; display: flex; flex-direction: column;
`;
const SideBox = styled.div<{ $h: number; $mt?: number; $bg?: string }>`
  height: ${p => p.$h}px; margin-top: ${p => p.$mt ?? 0}px; flex: none; border: 1px solid #b5b5b5;
  background: ${p => p.$bg ?? "#fff"};
  display: flex; align-items: center; justify-content: flex-end; padding-right: 4px;
`;

/* ---------- status bar ---------- */

const StatusBar = styled.div`
  height: 28px; flex: none; display: flex; align-items: center; padding: 1px 0 0 3px; font: 12px/16px ${tahoma}; letter-spacing: -0.45px;
`;
const Field = styled.div<{ $w: number; $hint?: boolean }>`
  width: ${p => p.$w}px; height: 22px; border: 1px solid #a9a9a9; border-radius: 3px; background: #fff; flex: none;
  display: flex; align-items: stretch; line-height: 20px; padding-left: 3px; overflow: hidden;
  color: ${p => p.$hint ? "#8a8a8a" : "#000"};
  svg { align-self: center; }
`;
const Drop = styled.div`width: 20px; border-left: 1px solid #b5b5b5; background: linear-gradient(#fff, #ececec); display: flex; align-items: center; justify-content: center;`;
const Spin = styled.div`
  width: 12px; border-left: 1px solid #b5b5b5; background: #f4f4f4; display: flex; flex-direction: column; align-items: center; justify-content: center; gap: 4px;
  &::before { content: ""; border: 3.500px solid transparent; border-top: 0; border-bottom-color: #555; }
  &::after { content: ""; border: 3.500px solid transparent; border-bottom: 0; border-top-color: #555; }
`;
const Text = styled.div<{ $w: number; $ls?: number }>`
  width: ${p => p.$w}px; flex: none; ${p => p.$ls !== undefined && css`letter-spacing: ${p.$ls}px;`}
`;

/* ---------- attribute table window ---------- */

const Dialog = styled.div`
  position: absolute; left: 1310px; top: 34px; width: 578px; height: 1012px; border: 1px solid #111; border-radius: 6px 6px 0 0;
  background: #b9d0e9; display: flex; flex-direction: column; padding: 0 6px 7px 7px;
  box-shadow: inset -1px -1px 0 #35cfe8;
`;
const DialogTitle = styled.div`
  height: 29px; margin: 0 -6px 0 -7px; padding: 0 9px 0 9px; flex: none; display: flex; align-items: center; border-radius: 5px 5px 0 0;
  background: linear-gradient(#96b2d0, #b6cce6); gap: 7px; color: #111; letter-spacing: -0.4px;
`;
const DialogBody = styled.div`flex: 1; background: #efefef; display: flex; flex-direction: column; min-height: 0; border-right: 1px solid #aaa;`;
const DialogTools = styled.div`height: 31px; flex: none; display: flex; align-items: center; padding: 0 0 1px 2.500px;`;
const Divider = styled.div`width: 7px; height: 12px; flex: none; display: flex; justify-content: center; &::after { content: ""; width: 1px; background: #d2d2d2; }`;
const More = styled.div`font: 700 15px/14px ${ui}; padding-left: 18px; padding-bottom: 3px;`;

const Grid = styled.div`
  height: 902px; flex: none; background: #fff; border-top: 1px solid #b0b0b0; display: grid; overflow: hidden;
  grid-template-columns: 19px repeat(5, 100px) 43px; grid-template-rows: 19px repeat(12, 30px) 1fr;
`;
const HeadCell = styled.div<{ $last?: boolean }>`
  border: solid #b5b5b5; border-width: 0 ${p => p.$last ? 0 : 1}px 1px 0; background: linear-gradient(#fefefe, #f0f0f0);
  display: flex; align-items: center; justify-content: ${p => p.$last ? "flex-end" : "center"}; letter-spacing: -0.2px; padding: 2px 0 0 1px;
`;
const NumCell = styled.div`
  border: solid #b0b0b0; border-width: 0 1px 1px 0; background: linear-gradient(#fdfdfd, #ececec);
  padding: 2px 0 0 2px; display: flex; align-items: center; letter-spacing: -0.3px;
`;
const Cell = styled.div<{ $alt: boolean; $right?: boolean; $focus?: boolean }>`
  border: solid #c4c4c4; border-width: 0 1px 1px 0; background: ${p => p.$alt ? "#e8e7e3" : "#fff"};
  padding: 0 3px; display: flex; align-items: center; justify-content: ${p => p.$right ? "flex-end" : "flex-start"}; letter-spacing: -0.4px;
  ${p => p.$focus && css`
    background: linear-gradient(#f3f8fe, #e9f2fd); box-shadow: inset 0 0 0 2px #05f58a; border-color: #05f58a;
  `}
`;
const RowGutter = styled.div`background: #efefef;`;
const DialogFoot = styled.div`flex: 1; display: flex; align-items: flex-start; padding: 1px 3px 0; gap: 1px;`;
const FootButton = styled.div<{ $w: number; $on?: boolean; $left?: boolean }>`
  width: ${p => p.$w}px; height: 23px; border: 1px solid #a9a9a9; border-radius: 3px; display: flex; align-items: center;
  justify-content: ${p => p.$left ? "flex-start" : "center"}; padding-left: ${p => p.$left ? 4 : 0}px; gap: 4px;
  background: ${p => p.$on ? "#dadada" : "linear-gradient(#fff, #ececec)"}; font: 12px/16px ${tahoma}; letter-spacing: -0.5px;
`;
const TinyCaret = styled.div`
  align-self: flex-end; margin: 0 0 3px -2px; border: 2.500px solid transparent; border-bottom: 0; border-top-color: #555;
`;

const columns = ["NAME_EN", "NGO_OPERAT", "NAME_SHORT", "DISTRICT", "District_1"];
const records: [number, string][] = [
  [12, "ACTED"], [2, "ACTED"], [11, "ACTED"], [6, "Oxfam"], [4, "JEN"], [3, "JEN"],
  [5, "JEN"], [8, "Oxfam"], [9, "ACTED"], [7, "Oxfam"], [10, "ACTED"], [1, "ACTED"],
];
const dialogTools = "pencil tableEdit saveGrey refresh | addRow trash cut copy paste | exprSel selAll invert deselect funnel moveTop panSel zoomSel | newField delField abacus |";

const menus: [string, string, string, number][] = [
  ["Pro", "j", "ect", 51], ["", "E", "dit", 34], ["", "V", "iew", 39], ["", "L", "ayer", 42], ["", "S", "ettings", 56], ["", "P", "lugins", 53],
  ["Vect", "o", "r", 48], ["", "R", "aster", 46], ["", "D", "atabase", 62], ["", "W", "eb", 38], ["Pro", "c", "essing", 71], ["", "H", "elp", 40],
];

export default function App() {
  return (
    <Desktop>
      <Global />
      <TitleBar>
        <Icon name="logo" size={16} />
        *Untitled Project - QGIS
        <Push />
        <WinButtons $drop={1}>
          <WinButton $tone="main"><WinGlyph kind="min" /></WinButton>
          <WinButton $tone="main"><WinGlyph kind="restore" /></WinButton>
          <WinButton $tone="main"><WinGlyph kind="close" /></WinButton>
        </WinButtons>
      </TitleBar>
      <MenuBar>
        {menus.map(([a, b, c, w]) => <MenuItem key={a + b + c} $w={w}>{a}<u>{b}</u>{c}</MenuItem>)}
      </MenuBar>
      <ToolBar>{renderTools(row1)}</ToolBar>
      <ToolBar>{renderTools(row2)}</ToolBar>

      <Workspace>
        <LeftDock>
          <DockHead $h={19}>Browser<Push />{dockButtons}</DockHead>
          <MiniBar $h={32}>
            {["addBox", "refresh", "funnel", "up", "info"].map(n => <MiniSlot key={n}><Icon name={n} size={15} /></MiniSlot>)}
          </MiniBar>
          <Frame $h={459}>
            <FrameRow>
              <TreeList>
                {tree.map(([depth, state, icon, name, on], i) => (
                  <TreeRow key={i} $depth={depth} $on={on} $ls={tracking(name)}>
                    <Twist $s={state} />
                    <TreeIcon $wide={icon.startsWith("vector")}><Icon name={icon} size={icon.startsWith("vector") ? 17 : 15} /></TreeIcon>
                    {name}
                  </TreeRow>
                ))}
              </TreeList>
              <VScroll><ScrollButton $d="u" /><VTrack><VThumb /></VTrack><ScrollButton $d="d" /></VScroll>
            </FrameRow>
            <HScroll><ScrollButton $d="l" /><HThumb $w={146} /><HTrack /><ScrollButton $d="r" /><Corner /></HScroll>
          </Frame>
          <SplitDots />
          <DockHead $h={20}>Layers<Push />{dockButtons}</DockHead>
          <MiniBar $h={30}>
            {["brush", "groupAdd", "eye", "funnel", "expr"].map(n => <MiniSlot key={n}><Icon name={n} size={15} /></MiniSlot>)}
            <Caret $w={12} />
            {["down", "up", "removeBox"].map(n => <MiniSlot key={n}><Icon name={n} size={15} /></MiniSlot>)}
          </MiniBar>
          <Frame $h={366} $drop={1}>
            <LayerRow $pad={23} $bold><Icon name="plainTable" size={15} /><Spacer $w={7} />DistrictData</LayerRow>
            <LayerRow $pad={3} $on $bold>
              <Twist $s="o" /><Check /><Spacer $w={6} /><Icon name="vectorPoly" size={17} /><Spacer $w={5} /><u>districts</u>
            </LayerRow>
            {classes.map((c, i) => (
              <LayerRow key={c} $pad={43}><Check /><Swatch $c={palette[i]} />{c}</LayerRow>
            ))}
          </Frame>
        </LeftDock>
        <Canvas><MapView /></Canvas>
        <RightDock>
          <DockHead $h={20}><Push />{dockButtons}</DockHead>
          <SideBox $h={21} />
          <SideBox $h={22} $mt={6} $bg="linear-gradient(#fdfdfd, #ececec)"><Caret $w={12} /></SideBox>
          <SideBox $h={817} $mt={6} />
          <SideBox $h={32} $mt={4} $bg="#efefef" />
        </RightDock>
      </Workspace>

      <StatusBar>
        <Field $w={200} $hint><Spacer $w={5} /><Icon name="search" size={13} /><Spacer $w={6} />Type to locate (Ctrl+K)</Field>
        <Spacer $w={8} />
        <Text $w={896} $ls={-0.74}>1 legend entries removed.</Text>
        <Text $w={57}>Coordinate</Text>
        <Field $w={98}><Text $w={92} $ls={-0.6}>4041850,3803520</Text></Field>
        <Spacer $w={3} /><Icon name="tracker" size={16} /><Spacer $w={13} />
        <Text $w={29}>Scale</Text>
        <Field $w={81}><Text $w={56} $ls={-0.5}>1:14895</Text><Drop><Caret $w={10} /></Drop></Field>
        <Spacer $w={10} /><Icon name="lock" size={15} /><Spacer $w={7} />
        <Text $w={48}>Magnifier</Text>
        <Field $w={87}><Text $w={70} $ls={-0.1}>100%</Text><Spin /></Field>
        <Spacer $w={9} />
        <Text $w={51}>Rotation</Text>
        <Field $w={84}><Text $w={67} $ls={-0.1}>0.0 °</Text><Spin /></Field>
        <Spacer $w={6} /><Check /><Spacer $w={5} />
        <Text $w={52}>Render</Text>
        <Icon name="crs" size={16} /><Spacer $w={2} />
        <Text $w={86} $ls={-0.65}>EPSG:900913</Text>
        <Icon name="bubble" size={16} />
      </StatusBar>

      <Dialog>
        <DialogTitle>
          <Icon name="logo" size={16} />
          <TitleText $drop={4}>districts :: Features Total: 12, Filtered: 12, Selected: 0</TitleText>
          <Push />
          <WinButtons $drop={9}>
            <WinButton $tone="dialog"><WinGlyph kind="min" /></WinButton>
            <WinButton $tone="dialog"><WinGlyph kind="max" /></WinButton>
            <WinButton $tone="close"><WinGlyph kind="close" /></WinButton>
          </WinButtons>
        </DialogTitle>
        <DialogBody>
          <DialogTools>
            {dialogTools.split(" ").map((t, i) => t === "|" ? <Divider key={i} /> : <MiniSlot key={i}><Icon name={t} size={15} /></MiniSlot>)}
            <More>»</More>
          </DialogTools>
          <Grid>
            <HeadCell />
            {columns.map(c => <HeadCell key={c}>{c}</HeadCell>)}
            <HeadCell $last>S</HeadCell>
            {records.map(([n, op], i) => {
              const alt = i % 2 === 1;
              return (
                <React.Fragment key={n}>
                  <NumCell>{i + 1}</NumCell>
                  <Cell $alt={alt} $focus={i === 0}>District {n}</Cell>
                  <Cell $alt={alt}>{op}</Cell>
                  <Cell $alt={alt}>D{n}</Cell>
                  <Cell $alt={alt} $right>{n}</Cell>
                  <Cell $alt={alt}>D{String(n).padStart(2, "0")}</Cell>
                  <Cell $alt={alt} />
                </React.Fragment>
              );
            })}
            <RowGutter />
          </Grid>
          <HScroll><ScrollButton $d="l" /><HThumb $w={28} /><HTrack /><ScrollButton $d="r" /></HScroll>
          <DialogFoot>
            <FootButton $w={120} $left><Icon name="funnel" size={15} />Show All Features<TinyCaret /></FootButton>
            <Push />
            <FootButton $w={24}><Icon name="form" size={15} /></FootButton>
            <FootButton $w={24} $on><Icon name="attrTable" size={15} /></FootButton>
          </DialogFoot>
        </DialogBody>
      </Dialog>
    </Desktop>
  );
}
